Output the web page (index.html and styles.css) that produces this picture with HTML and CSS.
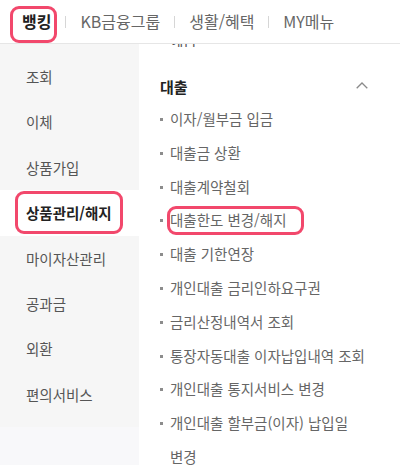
FILE: index.html
```html
<!DOCTYPE html>
<html lang="ko">
<head>
<meta charset="utf-8">
<title>뱅킹 메뉴</title>
<link rel="stylesheet" href="styles.css">
</head>
<body>
<header class="gnb">
  <span class="gnb-item gnb-active">뱅킹<span class="mark mark-gnb"></span></span>
  <span class="gnb-sep"></span>
  <span class="gnb-item">KB금융그룹</span>
  <span class="gnb-sep"></span>
  <span class="gnb-item">생활/혜택</span>
  <span class="gnb-sep"></span>
  <span class="gnb-item">MY메뉴</span>
</header>
<main class="menu">
  <aside class="side">
    <ul class="side-list">
      <li class="side-item">조회</li>
      <li class="side-item">이체</li>
      <li class="side-item">상품가입</li>
      <li class="side-item side-active">상품관리/해지<span class="mark mark-side"></span></li>
      <li class="side-item">마이자산관리</li>
      <li class="side-item">공과금</li>
      <li class="side-item">외환</li>
      <li class="side-item">편의서비스</li>
    </ul>
  </aside>
  <section class="content">
    <div class="prev"><span class="prev-text">예금</span></div>
    <div class="group-head">
      <h2 class="group-title">대출</h2>
      <svg class="chevron" width="12" height="7" viewBox="0 0 12 7"><path d="M0.7 6.3 L6 1 L11.3 6.3" fill="none" stroke="#8a8a8a" stroke-width="1.3"/></svg>
    </div>
    <ul class="sub-list">
      <li class="sub-item">이자/월부금 입금</li>
      <li class="sub-item">대출금 상환</li>
      <li class="sub-item">대출계약철회</li>
      <li class="sub-item"><span class="sub-text">대출한도 변경/해지<span class="mark mark-sub"></span></span></li>
      <li class="sub-item">대출 기한연장</li>
      <li class="sub-item">개인대출 금리인하요구권</li>
      <li class="sub-item">금리산정내역서 조회</li>
      <li class="sub-item">통장자동대출 이자납입내역 조회</li>
      <li class="sub-item">개인대출 통지서비스 변경</li>
      <li class="sub-item">개인대출 할부금(이자) 납입일 변경</li>
    </ul>
  </section>
</main>
</body>
</html>
```
FILE: styles.css
```css
* { box-sizing: border-box; }
html, body {
  margin: 0;
  padding: 0;
  width: 400px;
  height: 465px;
  overflow: hidden;
  background: #fff;
  font-family: "Noto Sans CJK KR", "Noto Sans", sans-serif;
}
ul { margin: 0; padding: 0; list-style: none; }
h2 { margin: 0; }

.gnb {
  display: flex;
  align-items: center;
  height: 44px;
  padding-left: 22px;
  border-bottom: 1px solid #e6e6e6;
}
.gnb-item {
  position: relative;
  font-size: 16px;
  line-height: 43px;
  color: #666;
}
.gnb-active {
  font-weight: 700;
  color: #222;
}
.gnb-sep {
  width: 1px;
  height: 12px;
  background: #d6d6d6;
  margin: 0 14px;
}

.mark {
  position: absolute;
  border: 3px solid #f2486c;
  border-radius: 9px;
  pointer-events: none;
}
.mark-gnb {
  left: -12px;
  right: -6px;
  top: 6px;
  bottom: 0;
}

.menu {
  display: flex;
  height: 421px;
}
.side {
  width: 139px;
  flex: none;
  background: #f8f8fa;
}
.side-list {
  background: #f6f6f6;
  padding: 10px 0 10px;
}
.side-item {
  position: relative;
  height: 45.4px;
  line-height: 45.4px;
  padding-left: 26px;
  font-size: 14.5px;
  color: #555;
}
.side-active {
  background: #fff;
  font-weight: 700;
  color: #222;
}
.mark-side {
  left: 15px;
  right: 16px;
  top: 1px;
  bottom: 2px;
}

.content {
  flex: 1;
  overflow: hidden;
  padding: 0 32px 0 21px;
}
.prev {
  height: 3px;
  overflow: hidden;
  display: flex;
  align-items: flex-end;
  padding-left: 10px;
}
.prev-text {
  font-size: 14.5px;
  line-height: 14px;
  color: #555;
}
.group-head {
  display: flex;
  align-items: center;
  justify-content: space-between;
  margin-top: 23px;
  height: 32px;
}
.group-title {
  font-size: 15px;
  font-weight: 700;
  color: #222;
}
.chevron {
  display: block;
  margin-top: -2px;
}
.sub-item {
  display: flex;
  font-size: 14.5px;
  line-height: 33.8px;
  color: #666;
  word-break: keep-all;
}
.sub-item::before {
  content: "";
  flex: none;
  width: 3px;
  height: 3px;
  background: #8c8c8c;
  margin: 16px 7px 0 0;
}
.sub-text {
  position: relative;
}
.mark-sub {
  left: -3px;
  right: -18px;
  top: 3px;
  bottom: 2px;
}
```
